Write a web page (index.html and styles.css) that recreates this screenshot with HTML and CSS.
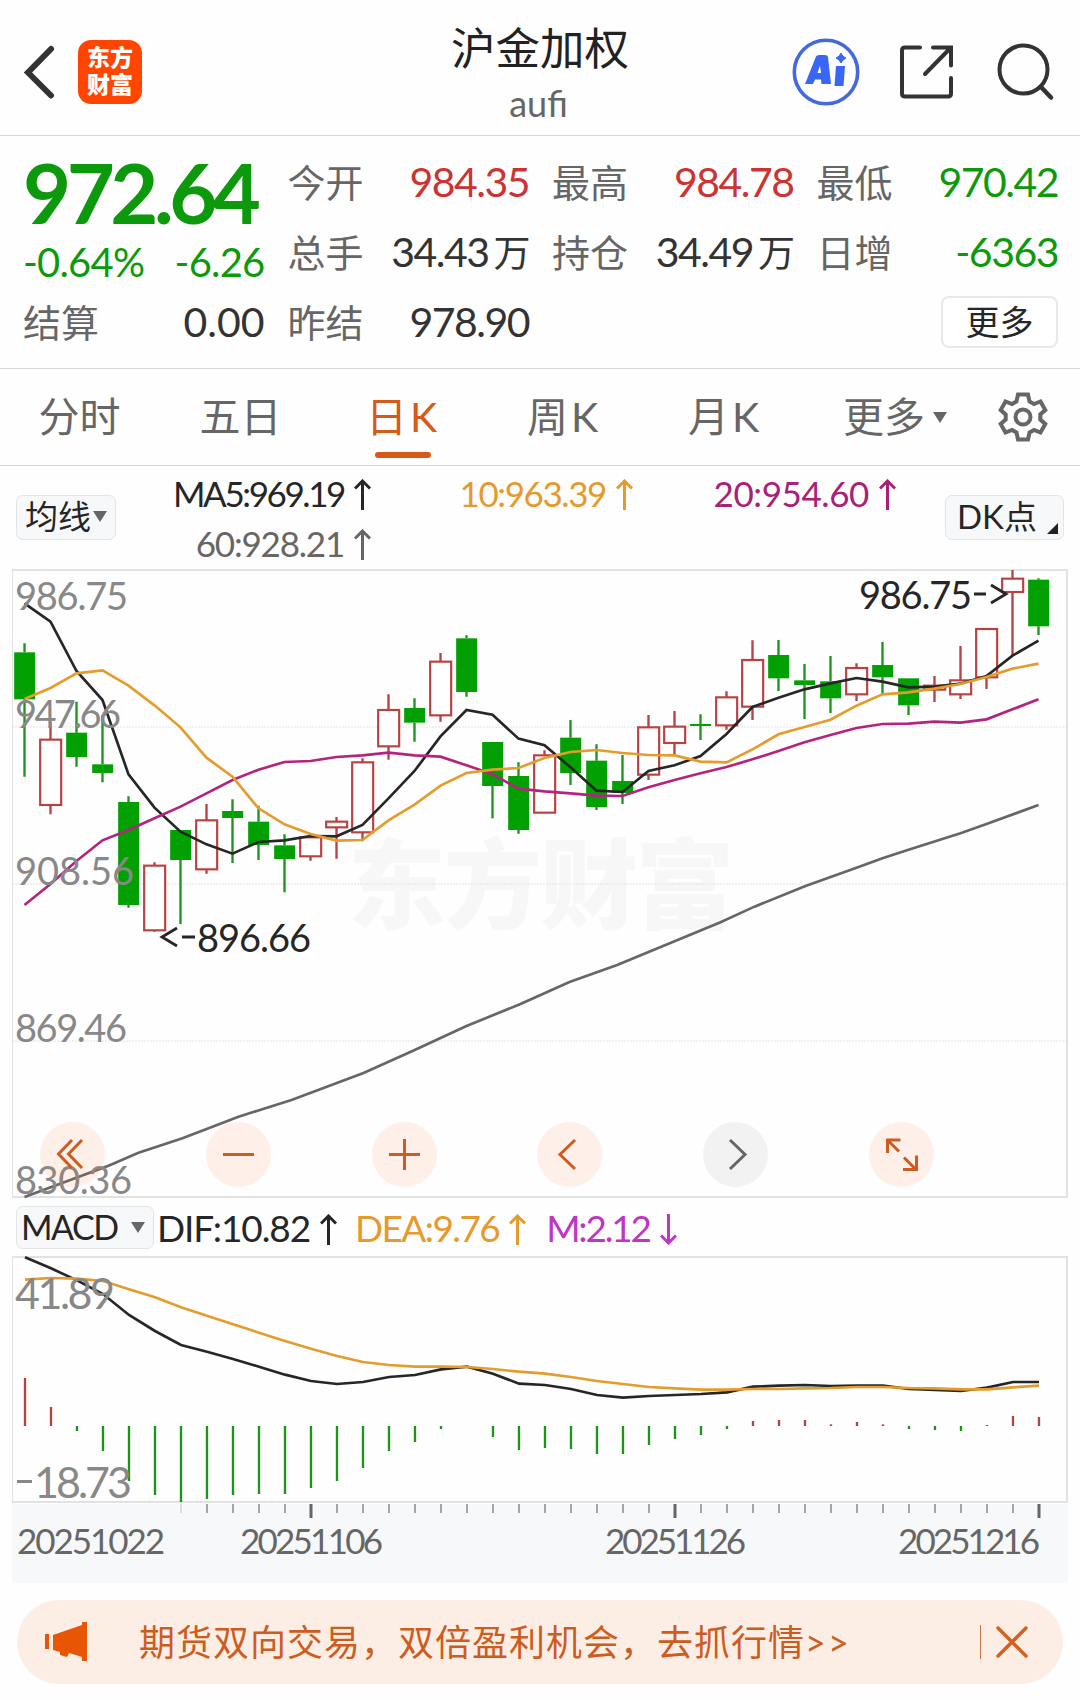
FILE: index.html
```
<!doctype html>
<html lang="zh-CN">
<head>
    <meta charset="utf-8">
    <meta name="viewport" content="width=device-width, initial-scale=1.0">
    <title>沪金加权 aufi</title>
    <link rel="stylesheet" href="styles.css">
</head>
<body>
    <svg class="defs">
        <symbol id="up" viewBox="0 0 17 31"><path d="M8.5 31V2M1 9.500l7.500-7.500 7.500 7.500" fill="none" stroke="currentColor" stroke-width="3"/></symbol>
        <symbol id="down" viewBox="0 0 17 31"><path d="M8.500 0v29M1 21.500l7.500 7.500 7.500-7.500" fill="none" stroke="currentColor" stroke-width="3"/></symbol>
    </svg>

    <header class="top">
        <div class="top-left">
            <svg class="back" width="32" height="54" viewBox="0 0 32 54"><path d="M28 4L5 27.500l23 23" fill="none" stroke="#333" stroke-width="6" stroke-linecap="round"/></svg>
            <div class="logo">东方<br>财富</div>
        </div>
        <div class="title">
            <h1>沪金加权</h1>
            <p>aufi</p>
        </div>
        <div class="top-right">
            <svg width="68" height="68" viewBox="0 0 68 68">
                <circle cx="34" cy="34" r="31.700" fill="none" stroke="#4468dd" stroke-width="3.600"/>
                <path d="M13 46L24 18.500Q25 17 27 17H33Q35.500 17 36 19L39 46H29.500L29 41.500H23L21 46ZM25.500 35H29L28 27.500Z" fill="#3a66f5" fill-rule="evenodd"/>
                <path d="M44 28h9l-1.500 20H42.500z" fill="#3a66f5"/>
                <path d="M49 15q1.500 4 5 5-3.500 1.500-5 5-1.500-3.500-5-5 3.500-1 5-5z" fill="#3a66f5" stroke="#3a66f5"/>
            </svg>
            <svg class="share" width="56" height="56" viewBox="0 0 56 56"><path d="M21 3.500H6q-3 0-3 3v43q0 3 3 3h43q3 0 3-3V34M34 3.500h18v18M52 3.500L26 30" fill="none" stroke="#333" stroke-width="4" stroke-linecap="round"/></svg>
            <svg class="search" width="58" height="58" viewBox="0 0 58 58"><circle cx="26.500" cy="26.500" r="24" fill="none" stroke="#333" stroke-width="4"/><path d="M44 44l10 10.500" stroke="#333" stroke-width="4.500" stroke-linecap="round"/></svg>
        </div>
    </header>

    <section class="quote">
        <div class="price green">
            <strong>972.64</strong>
            <div class="change"><span>-0.64%</span><span>-6.26</span></div>
        </div>
        <div class="cell"><label>今开</label><b class="red">984.35</b></div>
        <div class="cell"><label>最高</label><b class="red">984.78</b></div>
        <div class="cell"><label>最低</label><b class="green">970.42</b></div>
        <div class="cell"><label>总手</label><b>34.43<i>万</i></b></div>
        <div class="cell"><label>持仓</label><b>34.49<i>万</i></b></div>
        <div class="cell"><label>日增</label><b class="green">-6363</b></div>
        <div class="cell"><label>结算</label><b class="wide">0.00</b></div>
        <div class="cell"><label>昨结</label><b>978.90</b></div>
        <div class="cell more"><button>更多</button></div>
    </section>

    <nav class="tabs">
        <a>分时</a>
        <a>五日</a>
        <a class="active">日<span class="k">K</span></a>
        <a>周<span class="k">K</span></a>
        <a>月<span class="k">K</span></a>
        <a>更多<span class="tri"></span></a>
        <a class="gear"><svg width="50" height="50" viewBox="0 0 50 50" fill="none" stroke="#666" stroke-width="4">
            <path d="M20 2.500h10l1.500 7 4.500 2.500 6.500-2.500 4.800 8.500-5 4.500v5l5 4.500-4.800 8.500-6.500-2.500-4.500 2.500-1.500 7h-10l-1.500-7-4.500-2.500-6.500 2.500-4.800-8.500 5-4.500v-5l-5-4.500 4.800-8.500 6.500 2.500 4.500-2.500z"/>
            <circle cx="25" cy="25" r="7.500"/></svg></a>
    </nav>

    <section class="ma">
        <button class="pick">均线<span class="tri"></span></button>
        <div class="ma-values">
            <span class="c5">MA5:969.19<svg><use href="#up"/></svg></span>
            <span class="c10">10:963.39<svg><use href="#up"/></svg></span>
            <span class="c20">20:954.60<svg><use href="#up"/></svg></span>
            <span class="c60">60:928.21<svg><use href="#up"/></svg></span>
        </div>
        <button class="pick dk">DK点<span class="corner"></span></button>
    </section>

    <section class="panel">
        <svg class="chart" width="1080" height="629" viewBox="0 569 1080 629">
            <text class="mark" x="348" y="921" textLength="386">东方财富</text>
            <path class="grid" d="M12 727H1067M12 884H1067M12 1041H1067"/>
            <path class="frame" d="M12.500 570V1197"/>
            <path class="frame thick" d="M12 570H1067V1197H12"/>
            <g id="kline" transform="translate(.5 565) scale(.33333)"></g>
            <g class="scale">
                <text x="15" y="610" textLength="113">986.75</text>
                <text x="15" y="727.500" textLength="106">947.66</text>
                <text x="15" y="884.500" textLength="119">908.56</text>
                <text x="15" y="1041.500" textLength="112">869.46</text>
                <text x="15" y="1194" textLength="117">830.36</text>
            </g>
            <g class="tip">
                <text x="859" y="608.500" textLength="113">986.75</text>
                <path d="M974 594h12M991 585l15 9-15 9"/>
                <text x="197" y="951.500" textLength="114">896.66</text>
                <path d="M177 928l-15 9 15 9M182 937h13"/>
            </g>
        </svg>
        <div class="tools">
            <button><svg viewBox="0 0 65 65"><path d="M32 18L18.500 32l13.500 14M42 18L28.500 32l13.500 14"/></svg></button>
            <button><svg viewBox="0 0 65 65"><path d="M17 32.500h31"/></svg></button>
            <button><svg viewBox="0 0 65 65"><path d="M17 32.500h31M32.500 17v31"/></svg></button>
            <button><svg viewBox="0 0 65 65"><path d="M38 18L23 32.500l15 14.500"/></svg></button>
            <button class="off"><svg viewBox="0 0 65 65"><path d="M27 18L42 32.500 27 47"/></svg></button>
            <button><svg viewBox="0 0 65 65"><path d="M18.500 31V18h13M19 18.500l11 11M35 35.500l12 12M34 47.500h13.500v-14"/></svg></button>
        </div>
    </section>

    <section class="macd">
        <button class="pick">MACD<span class="tri"></span></button>
        <span class="c5 dif">DIF:10.82<svg><use href="#up"/></svg></span>
        <span class="c10 dea">DEA:9.76<svg><use href="#up"/></svg></span>
        <span class="cm">M:2.12<svg><use href="#down"/></svg></span>
    </section>

    <svg class="chart" width="1080" height="248" viewBox="0 1256 1080 248">
        <path class="frame" d="M12.500 1257V1502"/>
        <path class="frame thick" d="M12 1257H1067V1502H12"/>
        <g id="macd" transform="translate(1 1100) scale(.33333)"></g>
        <g class="scale big">
            <text x="15" y="1309" textLength="100">41.89</text>
            <path d="M17 1481.500h15"/>
            <text x="34" y="1498" textLength="98">18.73</text>
        </g>
    </svg>

    <svg class="chart" width="1080" height="79" viewBox="0 1504 1080 79">
        <rect x="12" y="1504" width="1056" height="79" fill="#f7f8fa"/>
        <g id="ticks"></g>
        <g class="dates">
            <text x="17" y="1554" textLength="148">20251022</text>
            <text x="240" y="1554" textLength="143">20251106</text>
            <text x="605" y="1554" textLength="141">20251126</text>
            <text x="898" y="1554" textLength="142">20251216</text>
        </g>
    </svg>

    <footer class="notice">
        <svg width="44" height="40" viewBox="0 0 44 40" fill="#e85504"><path d="M0 12h4v15H0zM8 13L37 3V0h5v39h-5v-4l-13-4-2 4-7-2v-3l-7-2z"/></svg>
        <p>期货双向交易，双倍盈利机会，去抓行情<span>&gt;&gt;</span></p>
        <span class="bar"></span>
        <svg width="32" height="32" viewBox="0 0 32 32"><path d="M2 2l28 28M30 2L2 30" stroke="#d65f1e" stroke-width="3.400" stroke-linecap="round"/></svg>
    </footer>

    <script src="chart.js"></script>
</body>
</html>
```
FILE: styles.css
```
html, body {
    margin: 0;
    padding: 0;
}
body {
    width: 1080px;
    height: 1700px;
    overflow: hidden;
    background-color: #fefefe;
    color: #333;
    font-family: Lato, "Noto Sans CJK SC", sans-serif;
}
h1, p {
    margin: 0;
    font-weight: normal;
}
button {
    padding: 0;
    font-family: inherit;
    color: #262626;
}
svg {
    flex: none;
}
.defs {
    display: none;
}
.green {
    color: #0c9a0c;
}
.red {
    color: #cc3333;
}

/* header */
.top {
    height: 135px;
    display: grid;
    grid-template-columns: 400px 280px 400px;
    border-bottom: 1px solid #d6d7d8;
}
.top-left, .top-right {
    display: flex;
    align-items: center;
    height: 144px;
}
.back {
    margin-left: 23px;
}
.logo {
    width: 64px;
    height: 64px;
    margin-left: 23px;
    box-sizing: border-box;
    padding-top: 4px;
    border-radius: 13px;
    background-color: #ff4500;
    color: white;
    font-size: 23px;
    font-weight: 900;
    line-height: 27px;
    text-align: center;
}
.title {
    text-align: center;
}
.title h1 {
    margin-top: 18px;
    font-size: 44.500px;
    line-height: 60px;
    color: #222;
}
.title p {
    font-size: 36px;
    line-height: 50px;
    margin-right: 3px;
    color: #666;
}
.top-right {
    justify-content: flex-end;
}
.share {
    margin-left: 39px;
}
.search {
    margin: 0 25px 0 42px;
}

/* quote */
.quote {
    height: 222px;
    padding: 11px 22px 0 23px;
    display: grid;
    grid-template-columns: repeat(4, 1fr);
    grid-template-rows: 70px 70px 70px;
    column-gap: 23px;
    border-bottom: 1px solid #d6d7d8;
}
.quote {
    box-sizing: border-box;
    height: 233px;
}
.price {
    grid-row: span 2;
}
.price strong {
    display: block;
    font-size: 83px;
    line-height: 90px;
    letter-spacing: -4.500px;
}
.change {
    display: flex;
    justify-content: space-between;
    font-size: 40px;
    line-height: 50px;
    letter-spacing: -0.800px;
}
.cell {
    display: flex;
    justify-content: space-between;
    align-items: center;
    line-height: 70px;
}
.cell label {
    font-size: 38px;
    color: #666;
}
.cell b {
    font-size: 41px;
    font-weight: normal;
    letter-spacing: -1.500px;
}
.cell b.wide {
    letter-spacing: 0;
}
.cell i {
    margin-left: 5px;
    font-size: 37px;
    font-style: normal;
}
.more {
    grid-column: 4;
    justify-content: flex-end;
}
.more button {
    width: 117px;
    height: 52px;
    border: 2px solid #e6e8ea;
    border-radius: 8px;
    background-color: white;
    font-size: 34px;
    line-height: 46px;
}

/* tabs */
.tabs {
    height: 96px;
    display: grid;
    grid-template-columns: repeat(5, 161px) 182px 72px;
    border-bottom: 1px solid #d6d7d8;
    font-size: 41px;
    line-height: 96px;
    color: #666;
}
.tabs a {
    display: flex;
    justify-content: center;
    align-items: center;
    position: relative;
    padding-right: 2px;
}
.tabs .gear {
    padding-right: 0;
}
.k {
    margin-left: 3px;
}
.tabs .active {
    color: #d65a1a;
}
.active::after {
    content: "";
    position: absolute;
    left: 53px;
    bottom: 7px;
    width: 56px;
    height: 6px;
    border-radius: 3px;
    background-color: #d65a1a;
}
.tri {
    border: 7px solid transparent;
    border-top: 11px solid #666;
    border-bottom: none;
}
.tabs .tri {
    margin-left: 8px;
}

/* indicator rows */
.pick {
    display: flex;
    align-items: center;
    box-sizing: border-box;
    border: 1.500px solid #e2e4e6;
    border-radius: 7px;
    background-color: #f7f8fa;
    line-height: 40px;
}
.ma {
    height: 103px;
    display: flex;
}
.ma .pick {
    width: 100px;
    height: 45px;
    margin: 29px 0 0 16px;
    padding: 0 0 3px 8px;
    font-size: 33px;
}
.ma .tri {
    margin-left: 2px;
}
.ma .dk {
    width: 119px;
    margin-left: 49px;
    padding-left: 11px;
    position: relative;
}
.corner {
    position: absolute;
    right: 5px;
    bottom: 5px;
    border-left: 11px solid transparent;
    border-bottom: 11px solid #222;
}
.ma-values {
    display: grid;
    grid-template-columns: 255px 262px 263px;
    grid-template-rows: 50px 50px;
    padding-top: 2px;
    text-align: right;
    font-size: 35px;
    line-height: 50px;
}
.ma-values svg, .macd span svg {
    width: 17px;
    height: 31px;
    margin-left: 10px;
    vertical-align: -3px;
}
.c5 {
    color: #262626;
}
.c10 {
    color: #e49a2c;
}
.c20 {
    color: #a82078;
}
.c60 {
    color: #666;
}
.cm {
    color: #bf35c4;
}
.ma-values .c5 {
    letter-spacing: -2.400px;
}
.ma-values .c10 {
    letter-spacing: -1.400px;
}
.ma-values .c20 {
    letter-spacing: -0.400px;
}
.ma-values .c60 {
    letter-spacing: -1.200px;
}
.macd {
    height: 58px;
    display: flex;
    align-items: center;
    font-size: 37px;
    letter-spacing: -1.100px;
}
.macd .pick {
    width: 138px;
    height: 43px;
    margin-left: 16px;
    padding-left: 4px;
    font-size: 34px;
    letter-spacing: -1.500px;
}
.macd .tri {
    margin-left: 13px;
}
.macd .dif {
    margin-left: 3px;
}
.dea {
    margin: 0 20px 0 18px;
    letter-spacing: -1.600px;
}
.macd .cm {
    letter-spacing: -2.200px;
}

/* charts */
.chart {
    display: block;
    overflow: visible;
}
.panel {
    position: relative;
}
.tools {
    position: absolute;
    left: 40px;
    top: 553px;
    display: flex;
    gap: 100.800px;
}
.tools button {
    width: 65px;
    height: 65px;
    border: none;
    border-radius: 50%;
    background-color: rgba(255, 110, 40, 0.1);
}
.tools svg {
    display: block;
    fill: none;
    stroke: #cd5c20;
    stroke-width: 3;
}
.tools .off {
    background-color: #f2f2f2;
}
.off svg {
    stroke: #666;
}
.mark {
    font-size: 98px;
    font-weight: 900;
    fill: #f7f7f7;
}
.grid {
    stroke: #e2e2e2;
    stroke-dasharray: 2 1;
}
.frame {
    fill: none;
    stroke: #e2e2e2;
}
.thick {
    stroke-width: 2;
}
.scale {
    font-size: 38px;
    fill: #888;
}
.big {
    font-size: 43px;
    stroke-width: 3;
}
.big path {
    stroke: #888;
}
.tip {
    font-size: 38px;
    fill: #262626;
}
.tip path {
    fill: none;
    stroke: #262626;
    stroke-width: 2.800;
}
.dates {
    font-size: 35px;
    fill: #666;
}
.line {
    fill: none;
    stroke-width: 8;
}
.up {
    fill: white;
    stroke: #b84242;
    stroke-width: 6.500;
}
.fall {
    fill: #02a002;
}
.wick {
    stroke-width: 7;
}

/* notice */
.notice {
    height: 84px;
    margin: 17px 17px 0;
    border-radius: 42px;
    display: flex;
    align-items: center;
    background-color: #fceee5;
}
.notice svg:first-child {
    margin-left: 28px;
}
.notice p {
    margin-left: 50px;
    padding-bottom: 4px;
    width: 841px;
    font-size: 36px;
    letter-spacing: 1px;
    color: #cd5c20;
}
.notice p span {
    letter-spacing: 2px;
}
.bar {
    flex: none;
    width: 1px;
    height: 34px;
    margin-right: 15px;
    background-color: #cd7a4a;
}
```
FILE: chart.js
```
const STEP = 78, FIRST = 72

// high, body top, body bottom, low, 1 = up day
const candles = [
    [235, 262, 403, 635, 0], [470, 524, 720, 748, 1], [410, 503, 576, 605, 0], [450, 598, 624, 652, 0],
    [694, 711, 1020, 1028, 0], [892, 902, 1096, 1100, 1], [795, 795, 885, 1077, 0], [717, 766, 913, 926, 1],
    [703, 738, 759, 894, 0], [722, 770, 840, 885, 0], [808, 841, 882, 982, 0], [815, 817, 874, 887, 1],
    [756, 770, 787, 881, 1], [580, 592, 802, 829, 1], [388, 435, 544, 584, 1], [400, 429, 473, 530, 0],
    [264, 290, 451, 470, 1], [211, 220, 381, 395, 0], [531, 531, 663, 760, 0], [592, 633, 795, 806, 0],
    [556, 571, 743, 745, 1], [465, 518, 624, 660, 0], [538, 587, 726, 735, 0], [570, 648, 684, 717, 0],
    [450, 487, 629, 645, 1], [438, 485, 534, 572, 1], [448, 477, 482, 525, 0], [379, 397, 481, 494, 1],
    [226, 285, 425, 465, 1], [225, 270, 340, 378, 0], [297, 346, 360, 462, 0], [273, 349, 400, 444, 0],
    [295, 309, 388, 408, 1], [231, 300, 337, 386, 0], [340, 340, 421, 450, 0], [333, 362, 374, 411, 1],
    [243, 346, 388, 402, 1], [192, 192, 337, 372, 1], [15, 41, 81, 270, 1], [40, 44, 184, 210, 0]
]
const ma5 = [115, 170, 318, 405, 628, 728, 800, 838, 866, 831, 826, 813, 814, 780, 700, 618, 514, 435, 449, 521, 541, 607, 677, 681, 618, 601, 573, 507, 426, 398, 373, 355, 339, 350, 367, 365, 356, 333, 272, 227]
const ma10 = [402, 369, 325, 316, 362, 421, 487, 578, 635, 730, 778, 807, 827, 825, 766, 719, 662, 624, 614, 609, 579, 561, 555, 564, 570, 571, 590, 592, 553, 508, 486, 464, 422, 388, 382, 371, 357, 336, 311, 296]
const ma20 = [1020, 957, 888, 826, 795, 760, 725, 685, 645, 614, 591, 588, 576, 571, 563, 571, 575, 601, 628, 671, 679, 685, 692, 693, 667, 645, 625, 606, 583, 558, 532, 510, 489, 477, 476, 470, 473, 463, 433, 403]
const ma60 = "72,1896 324,1802 414,1763 546,1720 714,1655 873,1605 1089,1524 1236,1458 1398,1383 1560,1317 1707,1251 1850,1200 2160,1072 2262,1025 2415,963 2568,908 2646,880 2724,854 2880,805 2958,777 3114,720"

const dif = [472, 505, 541, 582, 645, 693, 735, 755, 777, 800, 824, 843, 852, 846, 831, 825, 808, 800, 821, 851, 855, 867, 885, 893, 888, 885, 882, 877, 860, 857, 855, 858, 857, 857, 867, 870, 873, 863, 846, 846]
const dea = [539, 534, 536, 543, 568, 592, 622, 647, 673, 698, 723, 746, 768, 786, 795, 800, 800, 801, 807, 815, 821, 831, 843, 852, 861, 865, 869, 869, 867, 867, 865, 864, 861, 861, 864, 865, 868, 868, 862, 857]
const hist = [144, 57, -15, -75, -165, -207, -228, -219, -207, -204, -204, -186, -165, -126, -75, -48, -9, 0, -33, -72, -66, -69, -84, -84, -57, -39, -27, -9, 15, 18, 18, 5, 12, 5, -9, -12, -15, 3, 30, 27]

const px = (i) => FIRST + i * STEP

function line(points, color) {
    if (Array.isArray(points)) points = points.map((v, i) => px(i) + "," + v).join(" ")
    return `<polyline class="line" points="${points}" stroke="${color}"/>`
}

let out = ""
candles.forEach(([high, top, bottom, low, up], i) => {
    const x = px(i)
    out += `<path class="wick" d="M${x} ${high}V${top}M${x} ${bottom}V${low}" stroke="${up ? "#b84242" : "#1c941c"}"/>`
    if (up) out += `<rect class="up" x="${x - 31}" y="${top}" width="63" height="${bottom - top}"/>`
    else out += `<rect class="fall" x="${x - 31}" y="${top}" width="63" height="${Math.max(bottom - top, 6)}"/>`
})
out += line(ma60, "#666") + line(ma5, "#262626") + line(ma20, "#b3247e") + line(ma10, "#e49c2c")
document.getElementById("kline").innerHTML = out

out = ""
hist.forEach((v, i) => {
    if (v) out += `<path class="wick" d="M${px(i)} 978v${-v}" stroke="${v > 0 ? "#b84242" : "#1c941c"}"/>`
})
out += line(dif, "#262626") + line(dea, "#e49c2c")
document.getElementById("macd").innerHTML = out

out = ""
for (let i = 6; i < 40; i++) {
    const long = (i - 11) % 14 == 0
    out += `<path d="M${25 + i * 26} 1504v${long ? 14 : 9}" stroke="${i == 6 ? "#d5d5d5" : long ? "#666" : "#888"}" stroke-width="${long ? 3 : 1.5}"/>`
}
document.getElementById("ticks").innerHTML = out
```
